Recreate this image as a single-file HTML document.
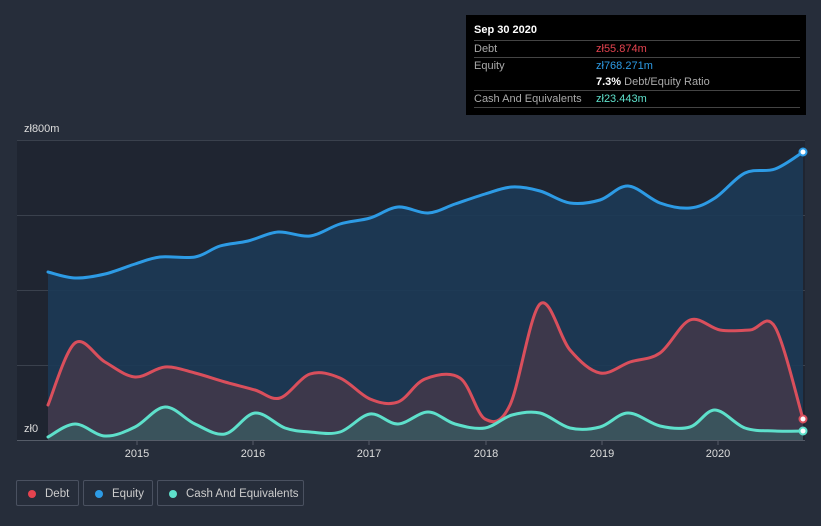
<!DOCTYPE html><html><head><style>
body{margin:0;width:821px;height:526px;background:#262d3a;font-family:"Liberation Sans",sans-serif;overflow:hidden;position:relative}
.tt{position:absolute;left:466px;top:15px;width:340px;height:100px;background:#000;color:#fff;font-size:11px}
.tt .r{position:absolute;left:8px;right:6px;border-top:1px solid #444;height:16px}
.tt span{position:absolute;left:0;color:#aaa}
.tt b{font-weight:normal;position:absolute;left:122px}
.leg{position:absolute;top:480px;height:26px;border:1px solid #4a5160;border-radius:2px;color:#ccc;font-size:11.5px;line-height:26px;box-sizing:border-box;white-space:nowrap}
.leg i{position:absolute;left:11px;top:9px;width:8px;height:8px;border-radius:50%}
</style></head><body>
<svg id="s" width="821" height="526" style="position:absolute;left:0;top:0">
<rect x="17" y="140" width="788" height="300" fill="#1f2531"/>
<g stroke="#3a414d" stroke-width="1"><line x1="17" y1="140.5" x2="805" y2="140.5"/><line x1="17" y1="215.5" x2="805" y2="215.5"/><line x1="17" y1="290.5" x2="805" y2="290.5"/><line x1="17" y1="365.5" x2="805" y2="365.5"/><line x1="17" y1="440.5" x2="805" y2="440.5" stroke="#555c68"/></g>
<path id="ea" fill="#1c3a56" opacity="0.9"/>
<path id="da" fill="#43384a" opacity="0.85"/>
<path id="ca" fill="#3a5a60" opacity="0.8"/>
<g fill="none" stroke-width="3" stroke-linejoin="round" stroke-linecap="round">
<path id="el" stroke="#2d9be5"/><path id="dl" stroke="#d94f5c"/><path id="cl" stroke="#5ee0cb"/>
</g>
<circle cx="803" cy="152" r="3.5" fill="#fff" stroke="#2d9be5" stroke-width="2"/>
<circle cx="803" cy="419" r="3.5" fill="#fff" stroke="#d94f5c" stroke-width="2"/>
<circle cx="803" cy="431" r="3.5" fill="#fff" stroke="#5ee0cb" stroke-width="2"/>
<g stroke="#555c68"><line x1="137" y1="440" x2="137" y2="445"/><line x1="253" y1="440" x2="253" y2="445"/><line x1="369" y1="440" x2="369" y2="445"/><line x1="486" y1="440" x2="486" y2="445"/><line x1="602" y1="440" x2="602" y2="445"/><line x1="718" y1="440" x2="718" y2="445"/></g>
<g fill="#ddd" font-size="11" text-anchor="middle" font-family="Liberation Sans"><text x="137" y="457">2015</text><text x="253" y="457">2016</text><text x="369" y="457">2017</text><text x="486" y="457">2018</text><text x="602" y="457">2019</text><text x="718" y="457">2020</text></g>
<text x="24" y="132" fill="#ddd" font-size="11" font-family="Liberation Sans">zł800m</text>
<text x="24" y="432" fill="#ddd" font-size="11" font-family="Liberation Sans">zł0</text>
</svg>
<div class="tt">
<div style="position:absolute;left:8px;top:9px;font-weight:bold">Sep 30 2020</div>
<div class="r" style="top:25px"><span style="top:2px">Debt</span><b style="top:2px;color:#e5434f">zł55.874m</b></div>
<div class="r" style="top:42px;height:32px"><span style="top:2px">Equity</span><b style="top:2px;color:#2d9be5">zł768.271m</b><b style="top:18px;color:#aaa"><span style="position:static;color:#fff;font-weight:bold">7.3%</span> Debt/Equity Ratio</b></div>
<div class="r" style="top:75px;border-bottom:1px solid #444"><span style="top:2px">Cash And Equivalents</span><b style="top:2px;color:#5ee0cb">zł23.443m</b></div>
</div>
<div class="leg" style="left:16px;width:63px"><i style="background:#e5434f"></i><span style="position:absolute;left:28px">Debt</span></div>
<div class="leg" style="left:83px;width:70px"><i style="background:#2d9be5"></i><span style="position:absolute;left:28px">Equity</span></div>
<div class="leg" style="left:157px;width:147px"><i style="background:#5ee0cb"></i><span style="position:absolute;left:28px">Cash And Equivalents</span></div>
<script>
function P(s){return s.trim().split(/\s+/).map(function(p){return p.split(',').map(Number)})}
function sm(p){var d='M'+p[0][0]+','+p[0][1];for(var i=0;i<p.length-1;i++){var a=p[i-1]||p[i],b=p[i],c=p[i+1],e=p[i+2]||c;var t=6;d+=' C'+(b[0]+(c[0]-a[0])/t)+','+(b[1]+(c[1]-a[1])/t)+' '+(c[0]-(e[0]-b[0])/t)+','+(c[1]-(e[1]-b[1])/t)+' '+c[0]+','+c[1]}return d}
var E=P("48,272 75,278 105,274 135,264 160,257 195,257 220,246 248,241 278,232 310,236 340,224 370,218 398,207 428,213 455,204 485,194 512,187 540,191 570,203 600,200 628,186 660,203 690,208 715,198 745,173 775,169 803,152");
var D=P("48,405 75,343 105,362 135,377 165,367 195,373 225,382 255,390 280,398 310,374 340,378 370,399 398,402 425,379 460,378 485,419 510,405 540,304 570,350 600,373 630,362 660,353 690,320 720,330 750,330 775,327 803,419");
var C=P("48,437 75,424 105,436 135,427 165,407 195,424 225,434 255,413 285,428 310,432 340,432 370,414 398,424 428,412 455,424 485,428 512,415 540,413 570,428 600,427 628,413 660,426 690,427 715,410 745,428 775,431 803,431");
[[E,'e'],[D,'d'],[C,'c']].forEach(function(x){var s=sm(x[0]);document.getElementById(x[1]+'l').setAttribute('d',s);document.getElementById(x[1]+'a').setAttribute('d',s+' L803,440 L48,440 Z')});
</script>
</body></html>
